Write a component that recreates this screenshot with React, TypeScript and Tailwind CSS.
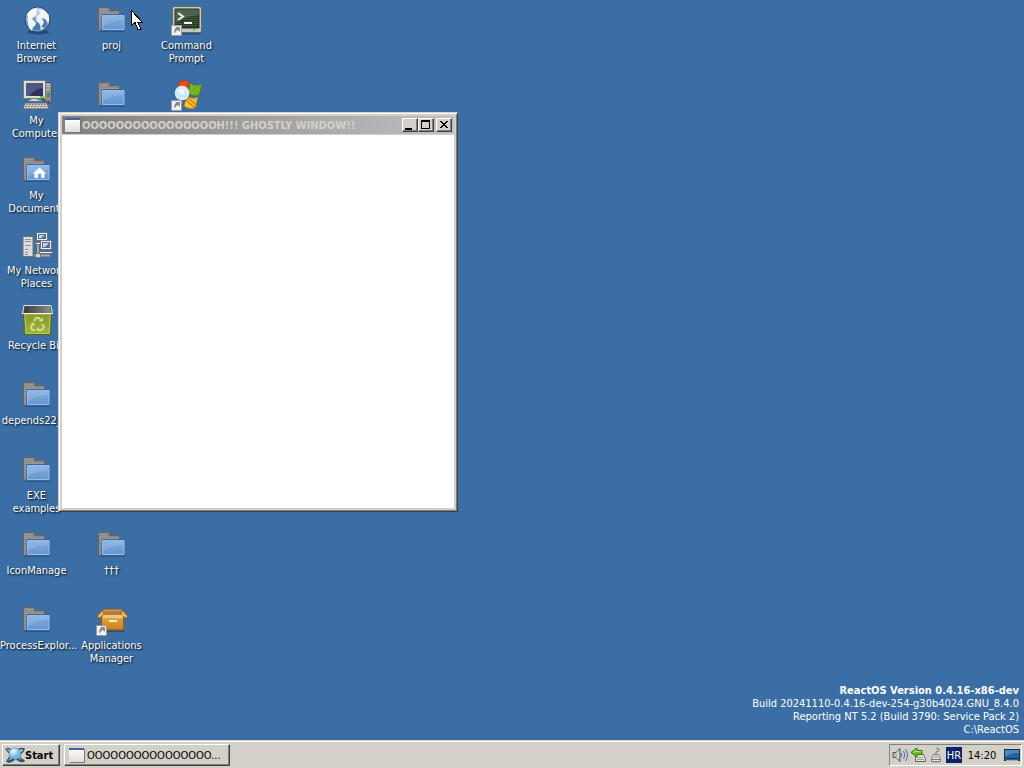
import { ReactNode } from "react";

interface IconProps {
  className?: string;
}

interface Shortcut {
  name: string;
  label?: string;
  icon: ReactNode;
  place: string;
}

function FolderShape() {
  return (
    <>
      <path d="M3 27h26" stroke="#1f4270" strokeOpacity=".5" strokeWidth="2" />
      <path d="M2.5 26.5V3.500h11v3h10v6h-17v14z" fill="#8b8986" stroke="#686663" />
      <path d="M3 5.500h9M3 7.500h9M3 9.500h20M3 11.500h4M3 13.500h3M3 15.500h3M3 17.500h3M3 19.500h3M3 21.500h3M3 23.500h3" stroke="#9b9996" />
      <path d="M6 10.500h23l-.5 16H5.500z" fill="url(#folderFront)" stroke="#3465a4" />
      <path d="M6.500 25.500v-14H28v14z" fill="none" stroke="#98bce5" />
      <path d="M7 12h20v4q-10 0-20 6z" fill="#fff" fillOpacity=".13" />
    </>
  );
}

function FolderIcon() {
  return (
    <svg viewBox="0 0 32 32" className="size-8">
      <FolderShape />
    </svg>
  );
}

function DocumentsIcon() {
  return (
    <svg viewBox="0 0 32 32" className="size-8">
      <FolderShape />
      <path d="M18.500 13.500l7 6h-2V24h-3.500v-4h-3v4h-3.500v-4.500h-2z" fill="#f4f7fb" />
    </svg>
  );
}

function GlobeIcon() {
  return (
    <svg viewBox="0 0 32 32" className="size-8">
      <ellipse cx="17" cy="28" rx="11" ry="2.500" fill="#16345c" fillOpacity=".6" />
      <circle cx="16.500" cy="15.500" r="12.500" fill="url(#globe)" stroke="#24467a" />
      <circle cx="16.500" cy="15.500" r="11.500" fill="none" stroke="#a9c4e2" strokeOpacity=".6" />
      <path d="M6 10l4-4 5-2 2 2-2 1 1 3-3 3-2 1 1 2-2-1-3-1zM6 14l5 1 4 4-1 3-2 1-1 4-3-3-1-4z" fill="#f4f6f8" />
      <path d="M18 5l5 1 5 5v6l-1 3-2-4-3-2-1 1 2 3-3 6-2-5-3-2 1-5 3-2-1-2zM19 24l3-1 1 1-3 2z" fill="#eef1f4" />
      <path d="M16.500 4a11.500 11.500 0 0 1 11 8Q17 17 6 11a11.500 11.500 0 0 1 10.500-7z" fill="#fff" fillOpacity=".2" />
    </svg>
  );
}

function ComputerIcon() {
  return (
    <svg viewBox="0 0 32 32" className="size-8">
      <path d="M23.500 3.500H30.500v20h-7z" fill="#8d918e" stroke="#555753" />
      <path d="M25 5.500h4M25 7.500h4M25 10.500h4" stroke="#c3c7bf" />
      <path d="M26 14h3v4h-3z" fill="#527f8e" />
      <rect x="2.500" y="1.500" width="22" height="18" rx="1" fill="#deded9" stroke="#777a75" />
      <path d="M5 4h17v13H5z" fill="#29315c" />
      <path d="M5 4h17v5q-9 1-13 8H5z" fill="#7580a8" fillOpacity=".5" />
      <path d="M10 20h7v1h3v1H8v-1h2z" fill="#e9e9e6" stroke="#858783" strokeWidth=".5" />
      <path d="M19 17h4v2h-4z" fill="#6bd21b" />
      <path d="M22 19q0 4 6 3v3" fill="none" stroke="#42474a" />
      <path d="M4 24h22l2 6H2z" fill="#d0d0cd" stroke="#686b67" />
      <path d="M5 25.500h20M4 27.500h22M4 29.500h23" stroke="#7d807c" strokeDasharray="2 1" />
    </svg>
  );
}

function NetworkIcon() {
  return (
    <svg viewBox="0 0 32 32" className="size-8">
      <path d="M13 26.500h16M17 16v9" stroke="#aaaaa7" strokeWidth="2" />
      <rect x="14.500" y="24.500" width="5" height="4" fill="#d4d4d0" stroke="#777" />
      <rect x="2" y="7.500" width="10" height="20" rx="1" fill="#deded9" stroke="#6d6f6c" />
      <path d="M4 10.500h6M4 12.500h6M4 16.500h6M4 20.500h3M4 23.500h3M4 25.500h3" stroke="#8d8f8b" />
      <path d="M15.500 3.500h11v8h-11zM14.500 13.500h12v2h-12z" fill="#eeeeec" stroke="#6d6f6c" />
      <path d="M17 5h8v5h-8z" fill="#4a6da0" />
      <path d="M18 6h6l-4 3h-2z" fill="#c4d2e6" />
      <path d="M19.500 11.500h11v9h-11zM18.500 22.500h13v2h-13z" fill="#eeeeec" stroke="#6d6f6c" />
      <path d="M21 13h8v6h-8z" fill="#4a6da0" />
      <path d="M22 14h6l-4 4h-2z" fill="#c4d2e6" />
    </svg>
  );
}

function RecycleIcon() {
  return (
    <svg viewBox="0 0 32 32" className="size-8">
      <path d="M2.500 8h28l-1 22.500h-26z" fill="url(#bin)" stroke="#55680b" />
      <path d="M4 10h25l-1 19.500H5z" fill="none" stroke="#b7ca58" />
      <path d="M3 1.500h27l1.500 8h-30z" fill="#4f5452" stroke="#dfe1dc" strokeLinejoin="round" />
      <path d="M4 2h25l1 7H3z" fill="url(#binHole)" />
      <path d="M1 9.500h31" stroke="#f4f5ef" />
      <g fill="none" stroke="#cfdc8e" strokeWidth="2">
        <path d="M13 17l2-3h3l2 3" />
        <path d="M21 20l2 3-2 3h-3" />
        <path d="M14 26h-3l-1-3 2-3" />
      </g>
      <path d="M18 18l4-1v-4zM18 23v5l-3-2.500zM9 20l4-2 1 4z" fill="#cfdc8e" />
    </svg>
  );
}

function ShortcutArrow() {
  return (
    <>
      <path d="M.5 21.500h10v10H.5z" fill="#f3f3f1" stroke="#999" />
      <path d="M4 23h5v5l-2-2q-3 1-3 4-2-4 1-6z" fill="#888" />
    </>
  );
}

function TerminalIcon() {
  return (
    <svg viewBox="0 0 32 32" className="size-8">
      <path d="M4 29.500h26" stroke="#1c395e" strokeOpacity=".6" strokeWidth="2" />
      <rect x="1.500" y="2.500" width="29" height="26" rx="2" fill="#c8c8c3" stroke="#696b67" />
      <path d="M4 5h24v19H4z" fill="#263c2b" stroke="#252c26" />
      <path d="M5 7.500h22M5 9.500h22M5 11.500h22M5 13.500h22M5 15.500h22M5 17.500h22M5 19.500h22M5 21.500h22" stroke="#4f6645" strokeOpacity=".65" />
      <path d="M4 5h24v6q-15 1-24 8z" fill="#9cb08e" fillOpacity=".25" />
      <path d="M7 9l5 3.500-5 3.500M13 19h8" fill="none" stroke="#f1f7ef" strokeWidth="2" />
      <path d="M22 25h2v2h-2z" fill="#73d216" />
      <ShortcutArrow />
    </svg>
  );
}

function FlagIcon() {
  return (
    <svg viewBox="0 0 32 32" className="size-8">
      <path d="M8 3q5-3 10-1l-2 11q-5-2-10 1z" fill="#e94c22" stroke="#a53512" strokeWidth=".5" />
      <path d="M19 4q6 4 12 1l-3 11q-6 2-11-2z" fill="#73b51b" stroke="#437b0b" strokeWidth=".5" />
      <path d="M4 16q5-3 10 0l-2 10q-5-3-10 0z" fill="#347bca" stroke="#225a98" strokeWidth=".5" />
      <path d="M16 17q6 4 11 1l-3 11q-6 2-11-2z" fill="#fac51b" stroke="#a87805" strokeWidth=".5" />
      <path d="M15 19l10 9" stroke="#c56b15" strokeWidth="4" />
      <path d="M16 20l8 7" stroke="#ffc53c" strokeWidth="2" />
      <circle cx="11" cy="14" r="6.500" fill="#c9e9fc" stroke="#e4edf5" strokeWidth="1.500" />
      <path d="M7 13q2-5 8-2-2 1-3 5z" fill="#fff" fillOpacity=".75" />
      <ShortcutArrow />
    </svg>
  );
}

function PackageIcon() {
  return (
    <svg viewBox="0 0 32 32" className="size-8">
      <path d="M5 27h23" stroke="#223e5f" strokeOpacity=".7" strokeWidth="2" />
      <path d="M5.500 11h22v15h-22z" fill="url(#box)" stroke="#9c5a08" />
      <path d="M7.500 5.500h18L29 12H4z" fill="#d09a58" stroke="#b7710b" />
      <path d="M9 7h15l2 4H7z" fill="#b37b42" />
      <path d="M7 6l-6 6.500L4 14l4-4zM26 6l6 6.500-3 1.500-4-4z" fill="#efb65d" stroke="#a96409" />
      <path d="M7 11h20v3H7z" fill="#f2c778" />
      <path d="M13 16h8v2h-8z" fill="#fff1bc" />
      <ShortcutArrow />
    </svg>
  );
}

function WindowIcon({ className }: IconProps) {
  return (
    <svg viewBox="0 0 16 16" className={"size-4 shrink-0 " + (className || "")} shapeRendering="crispEdges">
      <path d="M1 2h15v14H1z" fill="#777" />
      <path d="M0 1h15v14H0z" fill="url(#pane)" />
      <path d="M0 1h15v2H0z" fill="#3f63a5" />
      <path d="M0 3h15v1H0z" fill="#fff" />
    </svg>
  );
}

function StartLogo() {
  return (
    <svg viewBox="0 0 20 18" className="h-[18px] w-5 shrink-0">
      <g fill="none" strokeWidth="1.500">
        <path d="M1 3q3-2 9 4t9 8q-3 2-10-4T1 3z" stroke="#315c78" />
        <path d="M19 3q-4-2-10 4T2 15q3 2 10-4t7-8z" stroke="#234f6e" />
        <path d="M1 3q5 0 10 5M2 15q5-1 9-5" stroke="#4c91b7" />
      </g>
      <circle cx="10" cy="8" r="6" fill="url(#orb)" stroke="#4185af" strokeWidth=".5" />
      <path d="M2 15q3 2 7-2M12 13q5 3 7 1" fill="none" stroke="#26506c" strokeWidth="2" />
    </svg>
  );
}

function SpeakerIcon() {
  return (
    <svg viewBox="0 0 16 16" className="size-4 shrink-0">
      <path d="M1 5.500h3l4-4v13l-4-4H1z" fill="#b8b8b5" stroke="#555" />
      <path d="M6 4v8" stroke="#eee" />
      <path d="M9.500 6q1 2 0 4M11.500 4q3 4 0 8M13.500 2q4 6 0 12" fill="none" stroke="#476ea9" />
    </svg>
  );
}

function EjectIcon() {
  return (
    <svg viewBox="0 0 16 16" className="size-4 shrink-0">
      <path d="M5.500 7.500h8l2 4v3h-10z" fill="#e4e5e2" stroke="#666864" />
      <path d="M7 10.500h6M7 12.500h7" stroke="#9a9c97" />
      <path d="M7 1L1 5.500 7 10V7.500h5v-4H7z" fill="#73bd21" stroke="#34750c" />
      <path d="M3 5.500l3-2v1h5" fill="none" stroke="#b4e276" />
    </svg>
  );
}

function PlugIcon() {
  return (
    <svg viewBox="0 0 16 16" className="size-4 shrink-0">
      <path d="M8 8V5q4-1 3-3-1-2-3 0" fill="none" stroke="#777" />
      <path d="M5.500 7.500h5l2 5h-9zM3.500 12.500h9v2h-9z" fill="#e9e9e7" stroke="#777" />
      <path d="M5 14v2M8 14v2M11 14v2M7 9v2M9 9v2" stroke="#888" />
    </svg>
  );
}

function MonitorIcon() {
  return (
    <svg viewBox="0 0 16 16" className="size-4 shrink-0">
      <rect x=".5" y="2.500" width="15" height="11" fill="#2562a2" stroke="#182d48" />
      <path d="M1 3h14v3Q6 6 1 10z" fill="#4a86c3" />
      <path d="M1 11.500h14" stroke="#183455" />
      <path d="M2 13.500h12" stroke="#aaa" />
    </svg>
  );
}

function Gradients() {
  return (
    <svg className="absolute size-0">
      <defs>
        <linearGradient id="folderFront" x2="0" y2="1">
          <stop stopColor="#83aedf" />
          <stop offset="1" stopColor="#6595cf" />
        </linearGradient>
        <radialGradient id="globe" cx=".4" cy=".2">
          <stop stopColor="#c0d4ea" />
          <stop offset="1" stopColor="#4a78b2" />
        </radialGradient>
        <linearGradient id="bin" x2="0" y2="1">
          <stop stopColor="#83962a" />
          <stop offset="1" stopColor="#a0b53a" />
        </linearGradient>
        <linearGradient id="binHole">
          <stop stopColor="#383c3a" />
          <stop offset="1" stopColor="#8a8d88" />
        </linearGradient>
        <linearGradient id="box" x2="0" y2="1">
          <stop stopColor="#e7ab4c" />
          <stop offset="1" stopColor="#c6811c" />
        </linearGradient>
        <linearGradient id="pane" x2="0" y2="1">
          <stop stopColor="#fff" />
          <stop offset="1" stopColor="#dedede" />
        </linearGradient>
        <radialGradient id="orb" cx=".35" cy=".25">
          <stop stopColor="#f5fcff" />
          <stop offset="1" stopColor="#71b8dc" />
        </radialGradient>
      </defs>
    </svg>
  );
}

const shortcuts: Shortcut[] = [
  { name: "Internet Browser", label: "Internet\nBrowser", icon: <GlobeIcon />, place: "col-start-1 row-start-1" },
  { name: "My Computer", label: "My\nComputer", icon: <ComputerIcon />, place: "col-start-1 row-start-2" },
  { name: "My Documents", label: "My\nDocuments", icon: <DocumentsIcon />, place: "col-start-1 row-start-3" },
  { name: "My Network Places", label: "My Network\nPlaces", icon: <NetworkIcon />, place: "col-start-1 row-start-4" },
  { name: "Recycle Bin", label: "Recycle Bin", icon: <RecycleIcon />, place: "col-start-1 row-start-5" },
  { name: "depends22_", label: "depends22_...", icon: <FolderIcon />, place: "col-start-1 row-start-6" },
  { name: "EXE examples", label: "EXE\nexamples", icon: <FolderIcon />, place: "col-start-1 row-start-7" },
  { name: "IconManage", label: "IconManage", icon: <FolderIcon />, place: "col-start-1 row-start-8" },
  { name: "ProcessExplorer", label: "ProcessExplor...", icon: <FolderIcon />, place: "col-start-1 row-start-9" },
  { name: "proj", label: "proj", icon: <FolderIcon />, place: "col-start-2 row-start-1" },
  { name: "Folder", icon: <FolderIcon />, place: "col-start-2 row-start-2" },
  { name: "†††", label: "†††", icon: <FolderIcon />, place: "col-start-2 row-start-8" },
  { name: "Applications Manager", label: "Applications\nManager", icon: <PackageIcon />, place: "col-start-2 row-start-9" },
  { name: "Command Prompt", label: "Command\nPrompt", icon: <TerminalIcon />, place: "col-start-3 row-start-1" },
  { name: "Shortcut", icon: <FlagIcon />, place: "col-start-3 row-start-2" },
];

const raised =
  "bg-[#d4d0c8] border border-t-white border-l-white border-r-[#404040] border-b-[#404040] shadow-[inset_-1px_-1px_0_#808080]";

function DesktopIcon({ item }: { item: Shortcut }) {
  return (
    <button aria-label={item.name} className={"flex flex-col items-center pt-1 pr-[2px] " + item.place}>
      {item.icon}
      {item.label && (
        <span className="mt-[3px] w-full text-center whitespace-pre text-white [text-shadow:1px_1px_2px_#000]">
          {item.label}
        </span>
      )}
    </button>
  );
}

function GhostWindow() {
  return (
    <section className="absolute left-[58px] top-28 flex size-[400px] flex-col border border-t-[#d4d0c8] border-l-[#d4d0c8] border-r-[#404040] border-b-[#404040] bg-[#d4d0c8] p-[3px] shadow-[inset_1px_1px_0_#fff,inset_-1px_-1px_0_#808080]">
      <header className="flex h-[18px] items-center bg-linear-to-r from-[#808080] to-[#c0c0c0] px-[2px]">
        <WindowIcon className="ml-px" />
        <h1 className="ml-px flex-1 truncate font-bold text-[#d4d0c8]">OOOOOOOOOOOOOOOOH!!! GHOSTLY WINDOW!!</h1>
        <button aria-label="Minimize" className={"h-[14px] w-4 " + raised}>
          <svg viewBox="0 0 14 12" className="h-3 w-[14px]" shapeRendering="crispEdges">
            <path d="M2 9h7v2H2z" />
          </svg>
        </button>
        <button aria-label="Maximize" className={"h-[14px] w-4 " + raised}>
          <svg viewBox="0 0 14 12" className="h-3 w-[14px]" shapeRendering="crispEdges">
            <path d="M2 1h9v9H2zM3 3v6h7V3z" fillRule="evenodd" />
          </svg>
        </button>
        <button aria-label="Close" className={"ml-[2px] h-[14px] w-4 " + raised}>
          <svg viewBox="0 0 14 12" className="h-3 w-[14px]" shapeRendering="crispEdges">
            <path d="M3 2h2v1h1v1h2V3h1V2h2v1h-1v1H9v1H8v1h1v1h1v1h1v1H9V8H8V7H6v1H5v1H3V8h1V7h1V6h1V5H5V4H4V3H3z" />
          </svg>
        </button>
      </header>
      <div className="mt-px flex-1 bg-white" />
    </section>
  );
}

function Taskbar() {
  return (
    <footer className="flex h-7 shrink-0 border-t border-[#d4d0c8] bg-[#d4d0c8] px-[2px] pt-[3px] pb-[2px] shadow-[inset_0_1px_0_#fff]">
      <button className={"flex w-[58px] items-center pl-[2px] font-bold " + raised}>
        <StartLogo />
        Start
      </button>
      <button className={"ml-1 flex w-[166px] items-center gap-[2px] pl-1 " + raised}>
        <WindowIcon />
        <span>OOOOOOOOOOOOOOOO...</span>
      </button>
      <div className="ml-auto flex items-center gap-[2px] border border-t-[#808080] border-l-[#808080] border-r-white border-b-white pr-px pl-[2px]">
        <SpeakerIcon />
        <EjectIcon />
        <PlugIcon />
        <span className="flex size-4 items-center justify-center bg-[#0a246a] text-white">HR</span>
        <time className="mx-[3px] w-[30px] text-center">14:20</time>
        <span className="pl-[2px]">
          <MonitorIcon />
        </span>
      </div>
    </footer>
  );
}

export default function App() {
  return (
    <div className="flex h-screen flex-col overflow-hidden bg-[#3a6ea5] font-['DejaVu_Sans_Condensed','DejaVu_Sans',sans-serif] text-[11px] leading-[13px] text-black">
      <Gradients />
      <main className="relative min-h-0 flex-1">
        <div className="grid auto-rows-[75px] grid-cols-[repeat(3,75px)]">
          {shortcuts.map((item) => (
            <DesktopIcon key={item.place} item={item} />
          ))}
        </div>
        <GhostWindow />
        <div className="absolute right-[5px] bottom-1 text-right text-white">
          <p className="font-bold">ReactOS Version 0.4.16-x86-dev</p>
          <p>Build 20241110-0.4.16-dev-254-g30b4024.GNU_8.4.0</p>
          <p>Reporting NT 5.2 (Build 3790: Service Pack 2)</p>
          <p>C:\ReactOS</p>
        </div>
        <svg viewBox="0 0 12 20" className="absolute left-[131px] top-[10px] h-5 w-3" shapeRendering="crispEdges">
          <path d="M.5.5v15l3.500-3 3 7h3l-3-7h4.500z" fill="#fff" stroke="#000" />
        </svg>
      </main>
      <Taskbar />
    </div>
  );
}
